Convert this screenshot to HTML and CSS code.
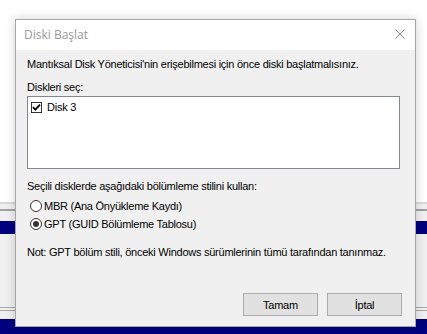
FILE: index.html
```html
<!DOCTYPE html>
<html lang="tr">
<head>
<meta charset="utf-8">
<title>Diski Başlat</title>
<link rel="stylesheet" href="styles.css">
</head>
<body>
<div class="desktop">
  <div class="band white-top"></div>
  <div class="band line-light"></div>
  <div class="band pale h5"></div>
  <div class="band line-dark"></div>
  <div class="band pale h9"></div>
  <div class="band navy h13"></div>
  <div class="band pale h73"></div>
  <div class="band line-mid"></div>
  <div class="band pale h2"></div>
  <div class="band line-mid"></div>
  <div class="band pale h8"></div>
  <div class="band navy fill"></div>
</div>

<div class="dialog">
  <div class="titlebar">
    <span class="title">Diski Başlat</span>
    <svg class="close" width="10" height="10" viewBox="0 0 10 10">
      <path d="M0.5 0.5 L9.5 9.5 M9.5 0.5 L0.5 9.5" stroke="#8c8c8c" stroke-width="1" fill="none"/>
    </svg>
  </div>
  <div class="content">
    <p class="line first">Mantıksal Disk Yöneticisi'nin erişebilmesi için önce diski başlatmalısınız.</p>
    <p class="line label">Diskleri seç:</p>
    <div class="listbox">
      <div class="item">
        <span class="checkbox">
          <svg width="9" height="9" viewBox="0 0 9 9"><path d="M1 4.2 L3.3 6.6 L8 1.6" stroke="#000" stroke-width="1.8" fill="none"/></svg>
        </span>
        <span>Disk 3</span>
      </div>
    </div>
    <p class="line section">Seçili disklerde aşağıdaki bölümleme stilini kullan:</p>
    <div class="radios">
      <div class="radio-row"><span class="radio"></span><span>MBR (Ana Önyükleme Kaydı)</span></div>
      <div class="radio-row"><span class="radio checked"></span><span>GPT (GUID Bölümleme Tablosu)</span></div>
    </div>
    <p class="line note">Not: GPT bölüm stili, önceki Windows sürümlerinin tümü tarafından tanınmaz.</p>
    <div class="buttons">
      <button class="btn">Tamam</button>
      <button class="btn">İptal</button>
    </div>
  </div>
</div>
</body>
</html>
```

FILE: styles.css
```css
html, body {
  margin: 0;
  padding: 0;
}
body {
  width: 427px;
  height: 334px;
  overflow: hidden;
  position: relative;
  background: #ffffff;
  font-family: "Liberation Sans", Arial, sans-serif;
  font-size: 11px;
  letter-spacing: -0.25px;
  color: #000;
}
.desktop {
  display: flex;
  flex-direction: column;
  height: 334px;
}
.band { flex: none; }
.white-top { height: 202px; background: #ffffff; }
.line-light { height: 2px; background: #d9d9d9; }
.pale { background: #f0f0f0; }
.h5 { height: 5px; }
.h9 { height: 10px; }
.h13 { height: 13px; }
.h73 { height: 73px; }
.h2 { height: 2px; }
.h8 { height: 8px; }
.line-dark { height: 2px; background: #a0a0a0; }
.line-mid { height: 1px; background: #a8a8a8; }
.navy { background: #000080; }
.fill { flex: 1; }

.dialog {
  position: absolute;
  left: 15px;
  top: 19px;
  width: 401px;
  height: 308px;
  box-sizing: border-box;
  border: 1px solid #a6a6a6;
  background: #f0f0f0;
  box-shadow: 0 0 10px rgba(0, 0, 0, 0.18);
  display: flex;
  flex-direction: column;
}
.titlebar {
  height: 30px;
  background: #ffffff;
  display: flex;
  align-items: center;
  justify-content: space-between;
  padding: 0 10px 0 8px;
  flex: none;
}
.title {
  font-family: "Open Sans", "Noto Sans", sans-serif;
  font-size: 12px;
  letter-spacing: 0;
  color: #9a9a9a;
  position: relative;
  top: -1px;
}
.close { display: block; margin-top: -2px; }

.content {
  flex: 1;
  padding: 8px 13px 0 11px;
  display: flex;
  flex-direction: column;
}
.line {
  margin: 0;
  line-height: 13px;
  white-space: nowrap;
}
.label { margin-top: 10px; }
.listbox {
  margin-top: 2px;
  margin-right: 2px;
  height: 73px;
  box-sizing: border-box;
  border: 1px solid #828790;
  background: #ffffff;
  padding: 4px 0 0 3px;
}
.item {
  display: flex;
  align-items: center;
  gap: 5px;
  line-height: 13px;
}
.checkbox {
  width: 11px;
  height: 11px;
  box-sizing: border-box;
  border: 1px solid #333333;
  background: #ffffff;
  display: flex;
  align-items: center;
  justify-content: center;
}
.checkbox svg { display: block; }
.section { margin-top: 11px; }
.radios {
  margin-top: 4px;
  display: flex;
  flex-direction: column;
}
.radio-row {
  height: 18px;
  display: flex;
  align-items: center;
  gap: 2px;
  padding-left: 3px;
}
.radio {
  width: 12px;
  height: 12px;
  box-sizing: border-box;
  border: 1px solid #333333;
  border-radius: 50%;
  background: #ffffff;
  display: flex;
  align-items: center;
  justify-content: center;
}
.radio.checked::after {
  content: "";
  width: 6px;
  height: 6px;
  border-radius: 50%;
  background: #333333;
}
.note { margin-top: 13px; }
.buttons {
  margin-top: 34px;
  display: flex;
  justify-content: flex-end;
  gap: 9px;
}
.btn {
  width: 75px;
  height: 23px;
  box-sizing: border-box;
  border: 1px solid #adadad;
  background: #e1e1e1;
  font-family: "Liberation Sans", Arial, sans-serif;
  font-size: 11px;
  letter-spacing: -0.25px;
  color: #000;
  padding: 0;
  margin: 0;
}
```
